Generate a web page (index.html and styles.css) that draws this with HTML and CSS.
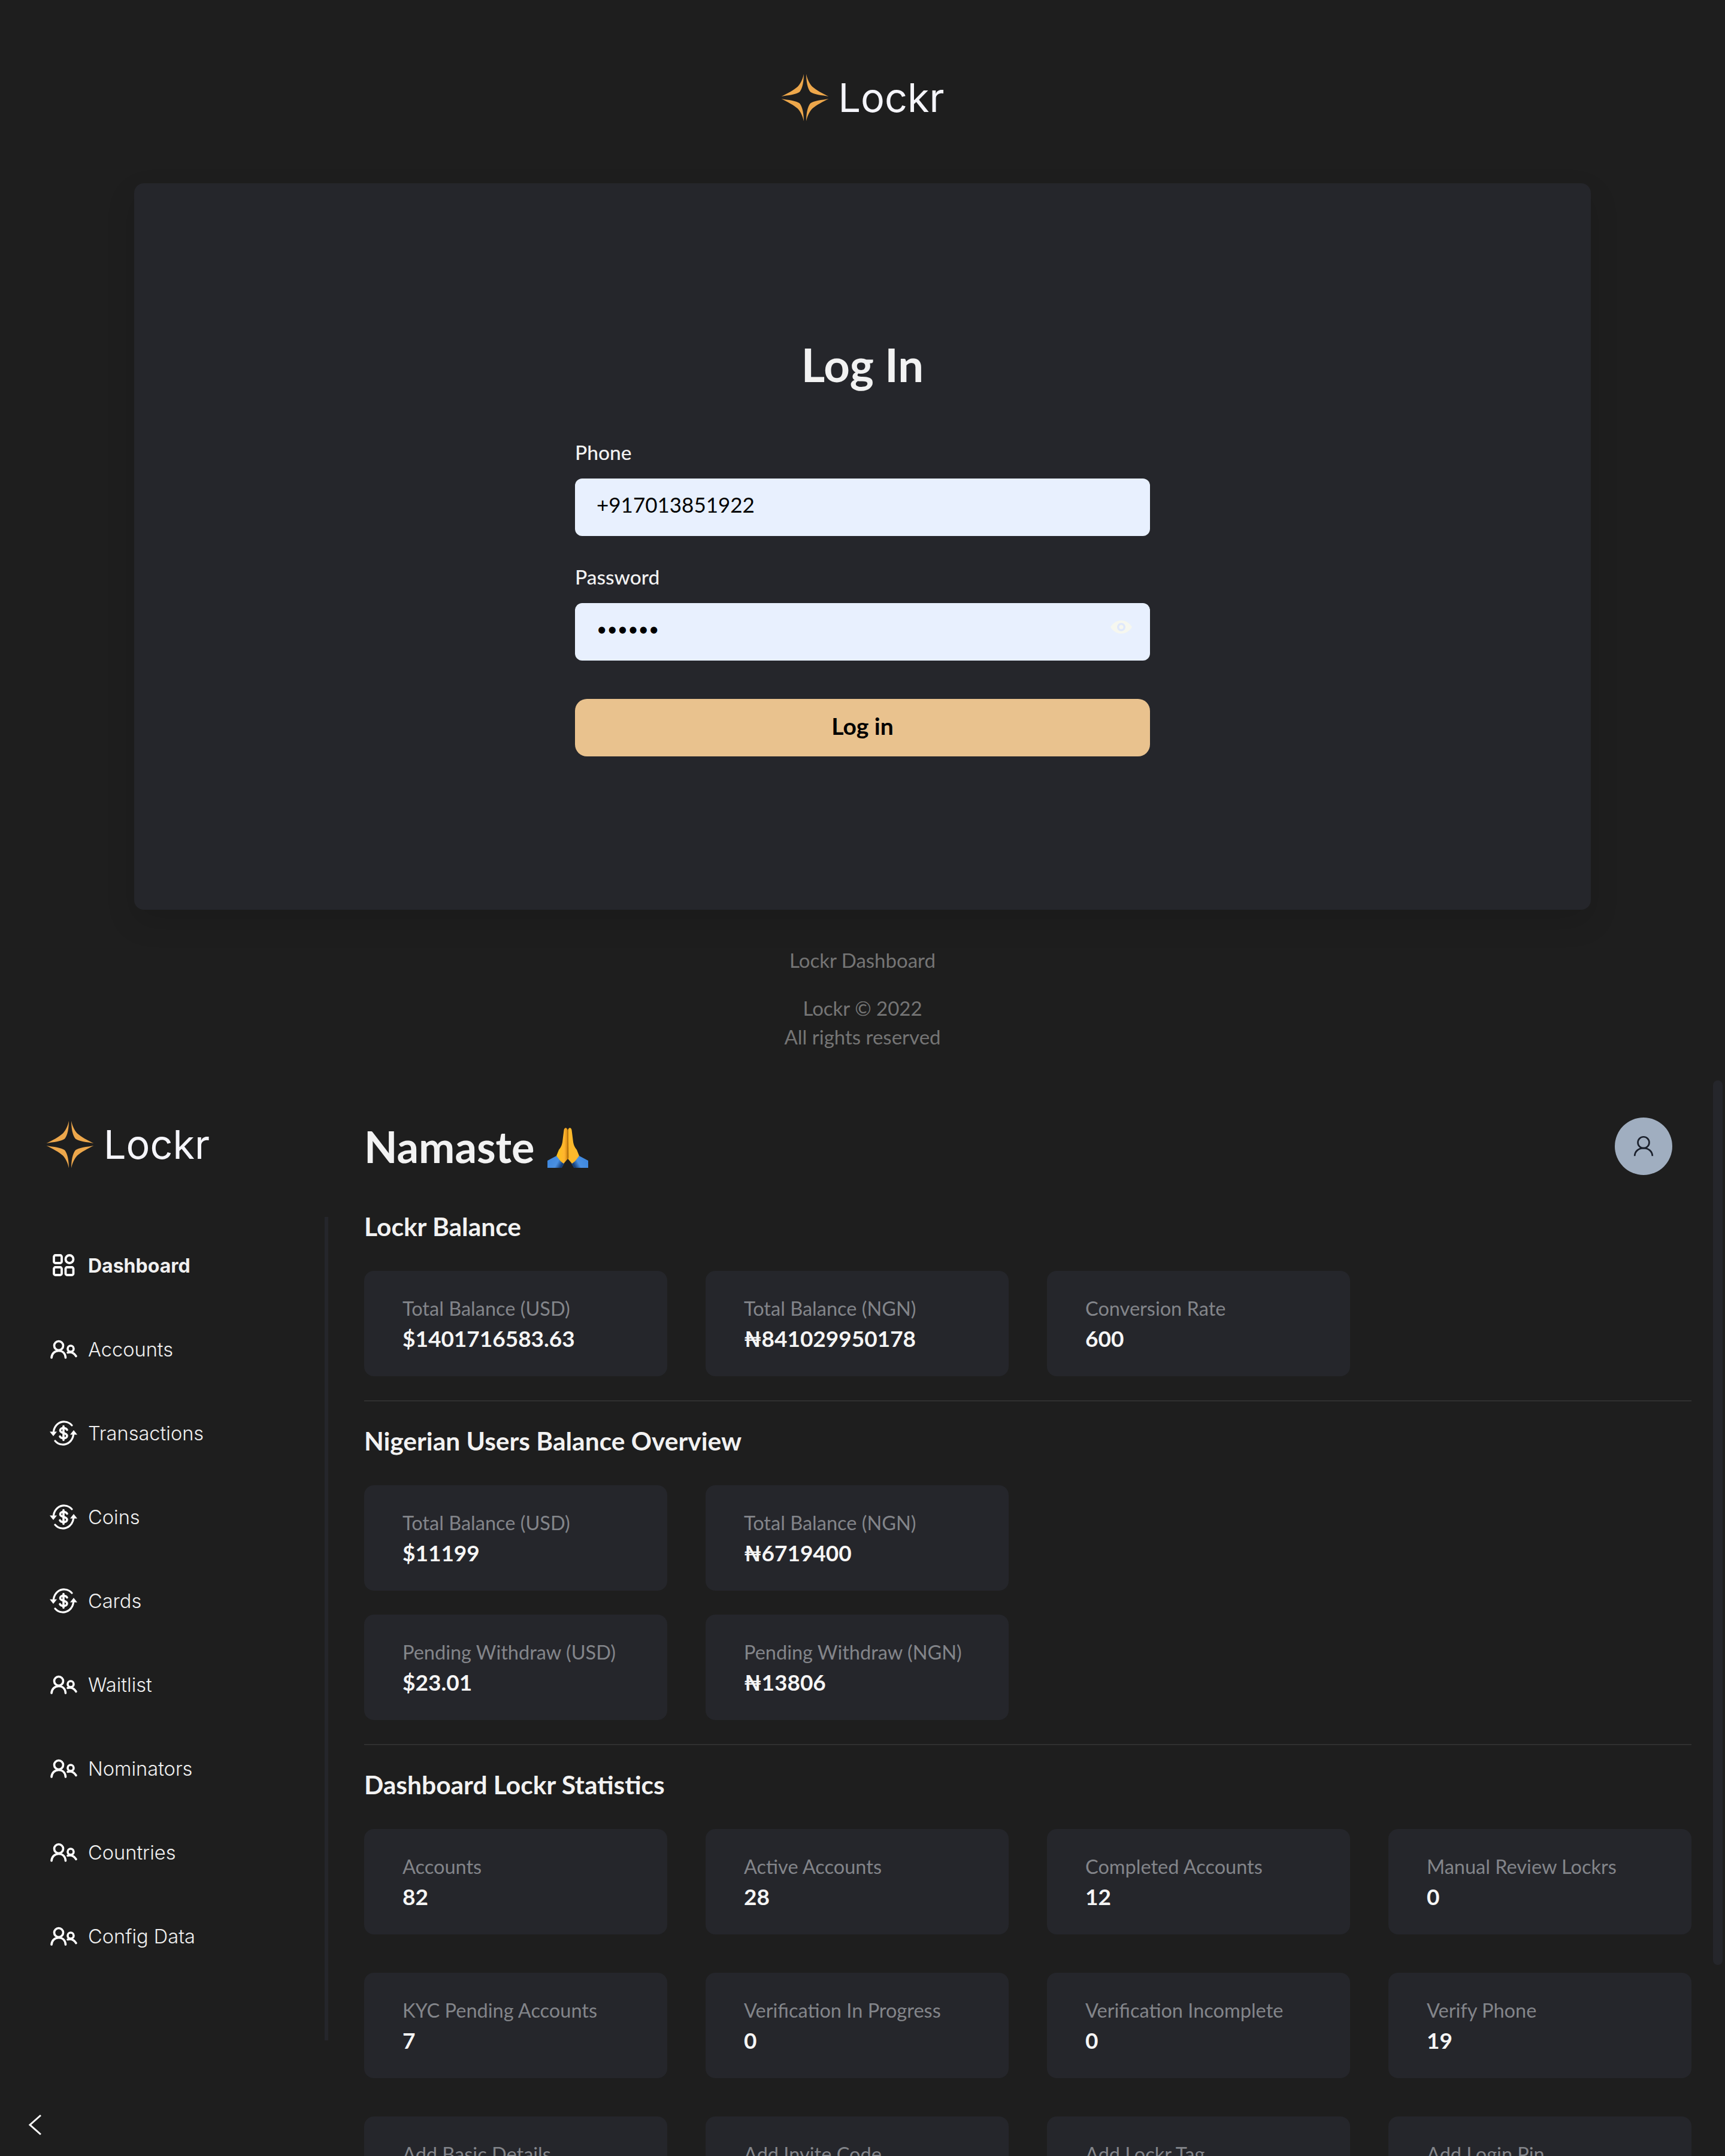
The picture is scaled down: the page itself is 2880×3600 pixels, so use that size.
FILE: index.html
```html
<!DOCTYPE html>
<html lang="en">
<head>
    <meta charset="UTF-8">
    <meta name="viewport" content="width=device-width, initial-scale=1.0">
    <title>Lockr Dashboard</title>
    <link rel="stylesheet" href="styles.css">
</head>
<body>
    <svg class="sprites" aria-hidden="true">
        <defs>
            <linearGradient id="skin" x1="0" y1="0" x2="1" y2="0">
                <stop offset="0" stop-color="#fcc21b"/>
                <stop offset="0.7" stop-color="#ffb52e"/>
                <stop offset="1" stop-color="#d98a12"/>
            </linearGradient>
            <linearGradient id="sleeve" x1="0" y1="0" x2="1" y2="0.4">
                <stop offset="0" stop-color="#3a84dc"/>
                <stop offset="0.7" stop-color="#4a90e2"/>
                <stop offset="1" stop-color="#17407a"/>
            </linearGradient>
        </defs>
        <symbol id="star" viewBox="-40 -40 80 80">
            <path id="petal" d="M2-39.500C4-30 8-22.500 12-18.500 18-13 30-6.500 39.500-2 28-4 15-5 9-9.500 4-15 2-28 2-39.500Z"/>
            <use href="#petal" transform="scale(-1 1)"/>
            <use href="#petal" transform="scale(1 -1)"/>
            <use href="#petal" transform="scale(-1 -1)"/>
        </symbol>
        <symbol id="i-grid" viewBox="0 0 48 48">
            <g fill="none" stroke="currentColor" stroke-width="3.800">
                <rect x="8" y="7" width="13" height="13" rx="2.500"/>
                <circle cx="34" cy="13.500" r="6.500"/>
                <rect x="8" y="27" width="13" height="13" rx="2.500"/>
                <rect x="27.500" y="27" width="13" height="13" rx="2.500"/>
            </g>
        </symbol>
        <symbol id="i-users" viewBox="0 0 48 48">
            <g fill="none" stroke="currentColor" stroke-width="3.600" stroke-linecap="round">
                <circle cx="16" cy="18" r="7.500"/>
                <path d="M4 38C4.500 31 9.500 26.500 16 26.500S27 31 27.500 38"/>
                <circle cx="36" cy="23" r="5"/>
                <path d="M31 29.500C35 28.500 41 29 45 35.500"/>
            </g>
        </symbol>
        <symbol id="i-coin" viewBox="0 0 48 48">
            <g fill="none" stroke="currentColor" stroke-width="3.200" stroke-linecap="round">
                <path d="M7.500 21C9 11 17 4.500 26 5 31 5.300 35 7.500 38 11"/>
                <path d="M40.500 27C39 37 31 43.500 22 43 17 42.700 13 40.500 10 37"/>
                <path d="M30 18.500C29 16.500 27 15.500 24 15.500 21 15.500 18.500 17 18.500 19.500 18.500 25 30 22.500 30 28.500 30 31 27.500 32.500 24 32.500 21 32.500 19 31.500 18 29.500" stroke-width="3.600"/>
                <path d="M24 12.500V35.500" stroke-width="3.600"/>
            </g>
            <path d="M1 21.500H13L7 29ZM35 26.500H47L41 19Z" fill="currentColor"/>
        </symbol>
    </svg>

    <section class="login-page">
        <div class="logo logo-center">
            <svg class="logo-star"><use href="#star"/></svg>
            <span class="logo-text">Lockr</span>
        </div>

        <div class="login-card">
            <h1>Log In</h1>
            <form class="login-form">
                <label for="phone">Phone</label>
                <input type="text" id="phone" value="+917013851922">
                <label for="password">Password</label>
                <div class="password-wrap">
                    <input type="password" id="password" value="secret">
                    <svg class="eye" viewBox="0 0 36 22">
                        <path d="M0 11C5 3.500 11 0 18 0S31 3.500 36 11C31 18.500 25 22 18 22S5 18.500 0 11Z" fill="#f6f7ef"/>
                        <circle cx="18" cy="11" r="7" fill="#dfe8fb"/>
                        <circle cx="18" cy="11" r="3.500" fill="#f6f7ef"/>
                    </svg>
                </div>
                <button type="button">Log in</button>
            </form>
        </div>

        <footer class="login-footer">
            <p>Lockr Dashboard</p>
            <p>Lockr © 2022<br>All rights reserved</p>
        </footer>
    </section>

    <section class="dash-page">
        <aside class="sidebar">
            <div class="logo">
                <svg class="logo-star"><use href="#star"/></svg>
                <span class="logo-text">Lockr</span>
            </div>
            <nav class="nav">
                <a class="nav-item active"><svg><use href="#i-grid"/></svg>Dashboard</a>
                <a class="nav-item"><svg><use href="#i-users"/></svg>Accounts</a>
                <a class="nav-item"><svg><use href="#i-coin"/></svg>Transactions</a>
                <a class="nav-item"><svg><use href="#i-coin"/></svg>Coins</a>
                <a class="nav-item"><svg><use href="#i-coin"/></svg>Cards</a>
                <a class="nav-item"><svg><use href="#i-users"/></svg>Waitlist</a>
                <a class="nav-item"><svg><use href="#i-users"/></svg>Nominators</a>
                <a class="nav-item"><svg><use href="#i-users"/></svg>Countries</a>
                <a class="nav-item"><svg><use href="#i-users"/></svg>Config Data</a>
            </nav>
            <svg class="collapse" viewBox="0 0 24 36"><path d="M21 2 3 18l18 16" fill="none" stroke="#fff" stroke-width="3"/></svg>
        </aside>

        <main class="main">
            <header class="main-head">
                <h2 class="namaste">Namaste</h2>
                <svg class="pray" viewBox="0 0 68 68">
                    <path d="M0 55 15 47 28 60 24 67H0Z" fill="url(#sleeve)"/>
                    <path d="M0 55 15 47 28 60 24 67H0Z" fill="url(#sleeve)" transform="matrix(-1 0 0 1 68 0)"/>
                    <path d="M33.700 4C32.500-1 28.500-1 27.500 4L25 24C24 30 22 33 19 37L15 47 22 56 27 60 33.700 52Z" fill="url(#skin)"/>
                    <path d="M34.300 4C35.500-1 39.500-1 40.500 4L43 24C44 30 46 33 49 37L53 47 46 56 41 60 34.300 52Z" fill="#fdb92b"/>
                    <path d="M33.300 4H34.700L35.500 50 34 53 32.500 50Z" fill="#b8760f"/>
                </svg>
                <div class="avatar">
                    <svg viewBox="0 0 40 40"><g fill="none" stroke="#1a202c" stroke-width="3"><circle cx="20" cy="13" r="10.500"/><path d="M3.500 38C4 29 11 23.500 20 23.500S36 29 36.500 38"/></g></svg>
                </div>
            </header>

            <h3 class="section-title">Lockr Balance</h3>
            <div class="grid">
                <div class="stat"><span>Total Balance (USD)</span><b>$1401716583.63</b></div>
                <div class="stat"><span>Total Balance (NGN)</span><b>₦841029950178</b></div>
                <div class="stat"><span>Conversion Rate</span><b>600</b></div>
            </div>
            <hr>

            <h3 class="section-title">Nigerian Users Balance Overview</h3>
            <div class="grid grid-tight">
                <div class="stat"><span>Total Balance (USD)</span><b>$11199</b></div>
                <div class="stat"><span>Total Balance (NGN)</span><b>₦6719400</b></div>
                <div class="stat row-start"><span>Pending Withdraw (USD)</span><b>$23.01</b></div>
                <div class="stat"><span>Pending Withdraw (NGN)</span><b>₦13806</b></div>
            </div>
            <hr>

            <h3 class="section-title">Dashboard Lockr Statistics</h3>
            <div class="grid grid-wide">
                <div class="stat"><span>Accounts</span><b>82</b></div>
                <div class="stat"><span>Active Accounts</span><b>28</b></div>
                <div class="stat"><span>Completed Accounts</span><b>12</b></div>
                <div class="stat"><span>Manual Review Lockrs</span><b>0</b></div>
                <div class="stat"><span>KYC Pending Accounts</span><b>7</b></div>
                <div class="stat"><span>Verification In Progress</span><b>0</b></div>
                <div class="stat"><span>Verification Incomplete</span><b>0</b></div>
                <div class="stat"><span>Verify Phone</span><b>19</b></div>
                <div class="stat"><span>Add Basic Details</span><b>0</b></div>
                <div class="stat"><span>Add Invite Code</span><b>0</b></div>
                <div class="stat"><span>Add Lockr Tag</span><b>0</b></div>
                <div class="stat"><span>Add Login Pin</span><b>0</b></div>
            </div>
        </main>
        <div class="scrollbar"></div>
    </section>
</body>
</html>
```

FILE: styles.css
```css
* {
    box-sizing: border-box;
}
html, body {
    margin: 0;
    padding: 0;
    background-color: #1e1e1e;
}
body {
    font-family: Lato, "Open Sans", sans-serif;
    color: #f2f2f2;
    height: 3600px;
    overflow: hidden;
}
.sprites {
    position: absolute;
    width: 0;
    height: 0;
}

/* logo */
.logo {
    display: flex;
    align-items: center;
    gap: 16px;
    height: 80px;
}
.logo-center {
    justify-content: center;
}
.logo-star {
    width: 80px;
    height: 80px;
    fill: #eda74b;
}
.logo-text {
    font-family: Inter, sans-serif;
    font-size: 66.5px;
    font-weight: 400;
    color: #f5f5fa;
}

/* login */
.login-page {
    height: 1800px;
    padding-top: 123px;
}
.login-card {
    width: 2432px;
    height: 1213px;
    margin: 103px auto 0;
    padding-top: 258px;
    background-color: #25262b;
    border-radius: 16px;
    box-shadow: 0 20px 50px rgba(0, 0, 0, 0.12);
}
.login-card h1 {
    margin: 0;
    text-align: center;
    font-size: 76px;
    line-height: 90px;
    font-weight: 700;
}
.login-form {
    width: 960px;
    margin: 77px auto 0;
    display: flex;
    flex-direction: column;
}
.login-form label {
    font-size: 33.5px;
    line-height: 48px;
    font-weight: 500;
    margin-bottom: 20px;
}
.login-form input {
    width: 100%;
    height: 96px;
    padding: 0 36px 10px;
    margin-bottom: 44px;
    border: none;
    border-radius: 12px;
    background-color: #e8f0fe;
    color: #000;
    font-family: Lato, sans-serif;
    font-size: 35px;
    outline: none;
}
.login-form input[type="password"] {
    font-size: 30px;
    padding-bottom: 12px;
}
.password-wrap {
    position: relative;
}
.eye {
    position: absolute;
    right: 30px;
    top: 29px;
    width: 36px;
    height: 22px;
}
.login-form button {
    height: 96px;
    margin-top: 20px;
    border: none;
    border-radius: 20px;
    background-color: #e9c28e;
    color: #000;
    font-family: Lato, sans-serif;
    font-size: 39px;
    font-weight: 700;
    padding-bottom: 8px;
}
.login-footer {
    margin-top: 60px;
    text-align: center;
    color: #757575;
    font-size: 33px;
    line-height: 48px;
}
.login-footer p {
    margin: 0 0 32px;
}

/* dashboard */
.dash-page {
    position: relative;
    height: 1800px;
    display: flex;
    overflow: hidden;
}
.sidebar {
    width: 548px;
    flex-shrink: 0;
    position: relative;
    padding-top: 71px;
}
.sidebar .logo {
    margin-left: 77px;
}
.sidebar::after {
    content: "";
    position: absolute;
    right: 0;
    top: 232px;
    width: 6px;
    height: 1375px;
    background-color: #25262b;
}
.nav {
    margin-top: 92px;
    display: flex;
    flex-direction: column;
}
.nav-item {
    display: flex;
    align-items: center;
    height: 140px;
    padding-left: 82px;
    gap: 17px;
    font-family: Inter, sans-serif;
    font-size: 32.6px;
    font-weight: 300;
    color: #f0f0f0;
}
.nav-item svg {
    width: 48px;
    height: 48px;
    color: #fff;
}
.nav-item.active {
    font-size: 32px;
    font-weight: 700;
}
.collapse {
    position: absolute;
    left: 47px;
    top: 1730px;
    width: 24px;
    height: 36px;
}
.main {
    margin-left: 60px;
    width: 2216px;
    padding-top: 66px;
}
.main-head {
    display: flex;
    align-items: center;
    height: 96px;
}
.namaste {
    margin: 0 21px 0 0;
    font-size: 72px;
    font-weight: 700;
    line-height: 96px;
}
.pray {
    width: 68px;
    height: 68px;
    margin-top: 6px;
}
.avatar {
    margin-left: auto;
    margin-right: 32px;
    width: 96px;
    height: 96px;
    border-radius: 50%;
    background-color: #a0aec0;
    display: flex;
    align-items: center;
    justify-content: center;
}
.avatar svg {
    width: 36px;
    height: 36px;
}
.section-title {
    margin: 0 0 45px;
    font-size: 42.5px;
    line-height: 58px;
    font-weight: 700;
}
.main-head + .section-title {
    margin-top: 57px;
}
.grid {
    display: grid;
    grid-template-columns: repeat(4, 506px);
    column-gap: 64px;
    row-gap: 40px;
}
.grid-wide {
    row-gap: 64px;
}
.row-start {
    grid-column: 1;
}
.stat {
    height: 176px;
    padding: 41px 64px 0;
    background-color: #25262b;
    border-radius: 16px;
    display: flex;
    flex-direction: column;
}
.stat span {
    font-size: 32.5px;
    line-height: 44px;
    color: #83858a;
}
.stat b {
    margin-top: 2px;
    font-size: 37px;
    line-height: 52px;
    font-weight: 700;
    color: #f5f5f5;
}
hr {
    margin: 40px 0 37px;
    border: none;
    height: 2px;
    background-color: #303030;
}
.scrollbar {
    position: absolute;
    left: 2860px;
    top: 4px;
    width: 16px;
    height: 1477px;
    border-radius: 8px;
    background-color: #25262b;
}
```
